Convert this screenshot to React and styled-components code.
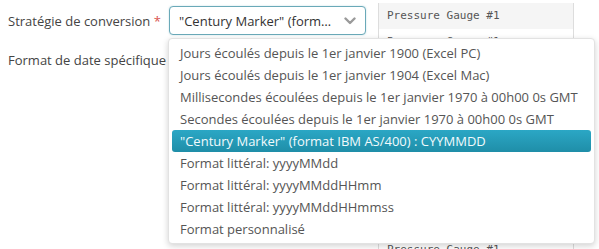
import React from 'react';
import styled, { createGlobalStyle } from 'styled-components';

const GlobalStyle = createGlobalStyle`
  body {
    margin: 0;
    background: #fff;
    font-family: "Open Sans", "Liberation Sans", sans-serif;
  }
`;

const options = [
  'Jours écoulés depuis le 1er janvier 1900 (Excel PC)',
  'Jours écoulés depuis le 1er janvier 1904 (Excel Mac)',
  'Millisecondes écoulées depuis le 1er janvier 1970 à 00h00 0s GMT',
  'Secondes écoulées depuis le 1er janvier 1970 à 00h00 0s GMT',
  '"Century Marker" (format IBM AS/400) : CYYMMDD',
  'Format littéral: yyyyMMdd',
  'Format littéral: yyyyMMddHHmm',
  'Format littéral: yyyyMMddHHmmss',
  'Format personnalisé',
];

const rows = Array.from({ length: 10 }, () => 'Pressure Gauge #1');

export default function App() {
  return (
    <Page>
      <GlobalStyle />
      <Form>
        <FieldRow>
          <Label>
            Stratégie de conversion <Required>*</Required>
          </Label>
          <SelectWrap>
            <SelectBox>
              <SelectValue>"Century Marker" (format IBM AS/400) : CYYMMDD</SelectValue>
              <Chevron width="12" height="8" viewBox="0 0 12 8">
                <path d="M1.5 1.5 L6 6 L10.5 1.5" fill="none" stroke="#9a9a9a" strokeWidth="2.4" strokeLinecap="round" strokeLinejoin="round" />
              </Chevron>
            </SelectBox>
            <Menu>
              {options.map((o, i) => (
                <MenuItem key={o} active={i === 4}>{o}</MenuItem>
              ))}
            </Menu>
          </SelectWrap>
        </FieldRow>
        <FieldRow>
          <Label>Format de date spécifique</Label>
        </FieldRow>
      </Form>
      <Table>
        {rows.map((r, i) => (
          <Row key={i} striped={i === 0}>{r}</Row>
        ))}
      </Table>
    </Page>
  );
}

const Page = styled.div`
  display: flex;
  width: 599px;
  height: 249px;
  overflow: hidden;
`;

const Form = styled.div`
  width: 378px;
  padding: 6px 0 0 8px;
  box-sizing: border-box;
  display: flex;
  flex-direction: column;
  gap: 10px;
`;

const FieldRow = styled.div`
  display: flex;
  align-items: center;
  min-height: 29px;
`;

const Label = styled.div`
  width: 161px;
  font-size: 13px;
  color: #444;
`;

const Required = styled.span`
  color: #d9534f;
`;

const SelectWrap = styled.div`
  position: relative;
`;

const SelectBox = styled.div`
  width: 197px;
  height: 29px;
  box-sizing: border-box;
  border: 1px solid #6aa9b8;
  border-radius: 4px;
  display: flex;
  align-items: center;
  padding: 0 9px 0 9px;
  gap: 4px;
  background: #fff;
  box-shadow: 0 0 2px rgba(80, 160, 180, 0.35);
`;

const SelectValue = styled.span`
  flex: 1;
  font-size: 13px;
  color: #333;
  white-space: nowrap;
  overflow: hidden;
  text-overflow: ellipsis;
`;

const Chevron = styled.svg`
  flex: none;
  margin-left: 4px;
`;

const Menu = styled.div`
  position: absolute;
  top: 32px;
  left: -1px;
  width: 427px;
  box-sizing: border-box;
  padding: 3px;
  background: #fff;
  border: 1px solid #e2e2e2;
  border-radius: 4px;
  box-shadow: 0 2px 6px rgba(0, 0, 0, 0.18);
  z-index: 10;
`;

const MenuItem = styled.div`
  height: 22px;
  line-height: 22px;
  padding: 0 8px;
  font-size: 13px;
  white-space: nowrap;
  border-radius: 3px;
  color: ${p => (p.active ? '#f2fafc' : '#555')};
  background: ${p => (p.active ? 'linear-gradient(#2ba7c5, #1f8ea8)' : 'transparent')};
`;

const Table = styled.div`
  width: 196px;
  margin-top: 3px;
  border-left: 1px solid #ddd;
  border-right: 1px solid #ddd;
  box-sizing: border-box;
  align-self: flex-start;
`;

const Row = styled.div`
  height: 26px;
  line-height: 26px;
  padding-left: 8px;
  font-family: "DejaVu Sans Mono", "Liberation Mono", monospace;
  font-size: 11px;
  color: #555;
  background: ${p => (p.striped ? '#f5f5f5' : '#fff')};
`;
